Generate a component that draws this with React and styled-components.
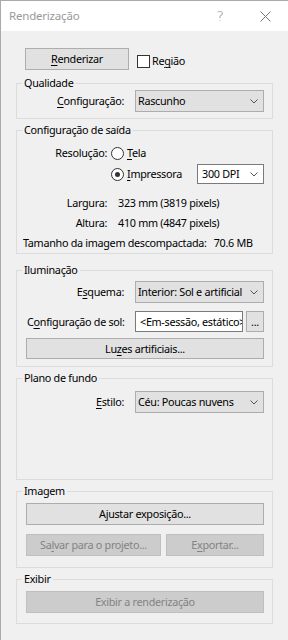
import React from 'react';
import styled, { createGlobalStyle } from 'styled-components';

const Global = createGlobalStyle`
  html, body { margin: 0; padding: 0; background: #f0f0f0; }
  body {
    font-family: "Noto Sans", "Open Sans", sans-serif;
    font-size: 10.8px;
    letter-spacing: -0.3px;
    line-height: 16px;
    color: #000;
  }
  * { box-sizing: border-box; }
  u { text-underline-offset: 2px; text-decoration-thickness: 1px; }
`;

const Window = styled.div`
  width: 288px;
  height: 640px;
  border-left: 1px solid #aaaaaa;
  border-top: 1px solid #aaaaaa;
  background: #f0f0f0;
  display: flex;
  flex-direction: column;
  overflow: hidden;
`;

const TitleBar = styled.div`
  height: 30px;
  background: #fff;
  display: flex;
  align-items: center;
  padding-left: 8px;
  color: #999;
  font-size: 11.5px;
  letter-spacing: -0.2px;
  flex-shrink: 0;
`;

const TitleText = styled.span`
  flex: 1;
`;

const CaptionButton = styled.div`
  width: ${p => p.$w}px;
  height: 30px;
  display: flex;
  align-items: center;
  justify-content: center;
  color: #888;
  font-family: "DejaVu Sans", sans-serif;
  font-size: 14px;
  font-weight: 300;
`;

const Body = styled.div`
  padding: 0 15px;
  display: flex;
  flex-direction: column;
`;

const TopRow = styled.div`
  margin-top: 17px;
  padding-left: 9px;
  display: flex;
  align-items: center;
`;

const Button = styled.div`
  height: ${p => p.$h || 22}px;
  width: ${p => (p.$w ? `${p.$w}px` : 'auto')};
  flex: ${p => (p.$w ? '0 0 auto' : '1')};
  background: ${p => (p.$disabled ? '#cccccc' : '#e1e1e1')};
  border: 1px solid ${p => (p.$disabled ? '#bfbfbf' : '#adadad')};
  color: ${p => (p.$disabled ? '#838383' : '#000')};
  display: flex;
  align-items: center;
  justify-content: center;
  white-space: nowrap;
`;

const CheckWrap = styled.label`
  display: flex;
  align-items: center;
  margin-left: 8px;
  margin-top: 4px;
  gap: 2px;
  white-space: nowrap;
`;

const CheckBox = styled.span`
  width: 13px;
  height: 13px;
  border: 1px solid #333;
  background: #fff;
  display: inline-block;
`;

const Group = styled.div`
  position: relative;
  border: 1px solid #dcdcdc;
  margin-top: ${p => p.$mt}px;
  padding: ${p => p.$pt}px 8px ${p => p.$pb}px 0;
  display: flex;
  flex-direction: column;
`;

const Legend = styled.span`
  position: absolute;
  top: -9px;
  left: 5px;
  padding: 0 2px;
  background: #f0f0f0;
  line-height: 16px;
  white-space: nowrap;
`;

const Row = styled.div`
  display: flex;
  align-items: center;
  height: ${p => p.$h || 22}px;
  margin-top: ${p => p.$mt || 0}px;
  padding-left: ${p => p.$pl || 0}px;
  gap: ${p => p.$gap || 0}px;
  white-space: nowrap;
`;

const Label = styled.span`
  width: ${p => p.$w}px;
  flex: 0 0 auto;
  text-align: ${p => p.$align || 'right'};
  padding-left: ${p => p.$pl || 0}px;
  margin-right: ${p => p.$mr || 0}px;
  white-space: nowrap;
`;

const Combo = styled.div`
  width: ${p => p.$w}px;
  height: ${p => p.$h || 22}px;
  flex: 0 0 auto;
  margin-left: ${p => (p.$auto ? 'auto' : '0')};
  background: ${p => (p.$white ? '#fff' : '#e1e1e1')};
  border: 1px solid ${p => (p.$white ? '#7a7a7a' : '#adadad')};
  display: flex;
  align-items: center;
  padding: 0 5px 0 ${p => p.$pl || 2}px;
  white-space: nowrap;
`;

const ComboText = styled.span`
  flex: 1;
  overflow: hidden;
`;

const Input = styled.div`
  width: ${p => p.$w}px;
  height: 21px;
  flex: 0 0 auto;
  background: #fff;
  border: 1px solid #7a7a7a;
  display: flex;
  align-items: center;
  padding-left: 4px;
  white-space: nowrap;
  overflow: hidden;
`;

const Radio = styled.span`
  width: 13px;
  height: 13px;
  border-radius: 50%;
  border: 1px solid #333;
  background: #fff;
  flex: 0 0 auto;
  display: flex;
  align-items: center;
  justify-content: center;
  margin-right: 3px;
  &::after {
    content: '';
    width: 5px;
    height: 5px;
    border-radius: 50%;
    background: ${p => (p.$checked ? '#333' : 'transparent')};
  }
`;

const Spacer = styled.span`
  width: ${p => p.$w}px;
  flex: 0 0 auto;
`;

const Chevron = () => (
  <svg width="8" height="5" viewBox="0 0 8 5" style={{ flex: '0 0 auto' }}>
    <path d="M0.5 0.5 L4 4 L7.5 0.5" fill="none" stroke="#555" strokeWidth="1" />
  </svg>
);

const CloseIcon = () => (
  <svg width="11" height="11" viewBox="0 0 11 11">
    <path d="M0.5 0.5 L10.5 10.5 M10.5 0.5 L0.5 10.5" stroke="#777" strokeWidth="1" fill="none" />
  </svg>
);

export default function App() {
  return (
    <>
      <Global />
      <Window>
        <TitleBar>
          <TitleText>Renderização</TitleText>
          <CaptionButton $w={46}>?</CaptionButton>
          <CaptionButton $w={45}><CloseIcon /></CaptionButton>
        </TitleBar>
        <Body>
          <TopRow>
            <Button $w={104}><span><u>R</u>enderizar</span></Button>
            <CheckWrap>
              <CheckBox />
              <span>Re<u>g</u>ião</span>
            </CheckWrap>
          </TopRow>

          <Group $mt={13} $pt={6} $pb={6}>
            <Legend>Qualidade</Legend>
            <Row>
              <Label $w={107} $mr={11}><u>C</u>onfiguração:</Label>
              <Combo $w={129}><ComboText>Rascunho</ComboText><Chevron /></Combo>
            </Row>
          </Group>

          <Group $mt={11} $pt={14} $pb={2}>
            <Legend>Configuração de saída</Legend>
            <Row $h={16}>
              <Label $w={90} $mr={4}>Resolução:</Label>
              <Radio />
              <span><u>T</u>ela</span>
            </Row>
            <Row $h={20} $mt={3}>
              <Spacer $w={94} />
              <Radio $checked />
              <span><u>I</u>mpressora</span>
              <Combo $w={67} $h={20} $white $pl={4} $auto><ComboText>300 DPI</ComboText><Chevron /></Combo>
            </Row>
            <Row $h={16} $mt={11}>
              <Label $w={90} $mr={11}>Largura:</Label>
              <span>323 mm (3819 pixels)</span>
            </Row>
            <Row $h={16} $mt={4}>
              <Label $w={90} $mr={11}>Altura:</Label>
              <span>410 mm (4847 pixels)</span>
            </Row>
            <Row $h={16} $mt={4} $pl={6} $gap={7}>
              <span>Tamanho da imagem descompactada:</span>
              <span>70.6 MB</span>
            </Row>
          </Group>

          <Group $mt={16} $pt={10} $pb={7}>
            <Legend>Iluminação</Legend>
            <Row>
              <Label $w={107} $mr={11}>E<u>s</u>quema:</Label>
              <Combo $w={129}><ComboText>Interior: Sol e artificial</ComboText><Chevron /></Combo>
            </Row>
            <Row $h={21} $mt={8}>
              <Label $w={118} $align="left" $pl={10}>C<u>o</u>nfiguração de sol:</Label>
              <Input $w={108}>&lt;Em-sessão, estático&gt;</Input>
              <Spacer $w={3} />
              <Button $w={18} $h={21}>...</Button>
            </Row>
            <Row $h={21} $mt={6} $pl={9}>
              <Button $h={21}><span>Lu<u>z</u>es artificiais...</span></Button>
            </Row>
          </Group>

          <Group $mt={11} $pt={12} $pb={66}>
            <Legend>Plano de fundo</Legend>
            <Row>
              <Label $w={107} $mr={11}><u>E</u>stilo:</Label>
              <Combo $w={129}><ComboText>Céu: Poucas nuvens</ComboText><Chevron /></Combo>
            </Row>
          </Group>

          <Group $mt={11} $pt={11} $pb={11}>
            <Legend>Imagem</Legend>
            <Row $pl={9}>
              <Button><span>A<u>j</u>ustar exposição...</span></Button>
            </Row>
            <Row $mt={9} $pl={9} $gap={5}>
              <Button $w={135} $disabled><span>Sa<u>l</u>var para o projeto...</span></Button>
              <Button $disabled><span>E<u>x</u>portar...</span></Button>
            </Row>
          </Group>

          <Group $mt={11} $pt={11} $pb={10}>
            <Legend>Exibir</Legend>
            <Row $pl={9}>
              <Button $disabled>Exibir a renderização</Button>
            </Row>
          </Group>
        </Body>
      </Window>
    </>
  );
}
